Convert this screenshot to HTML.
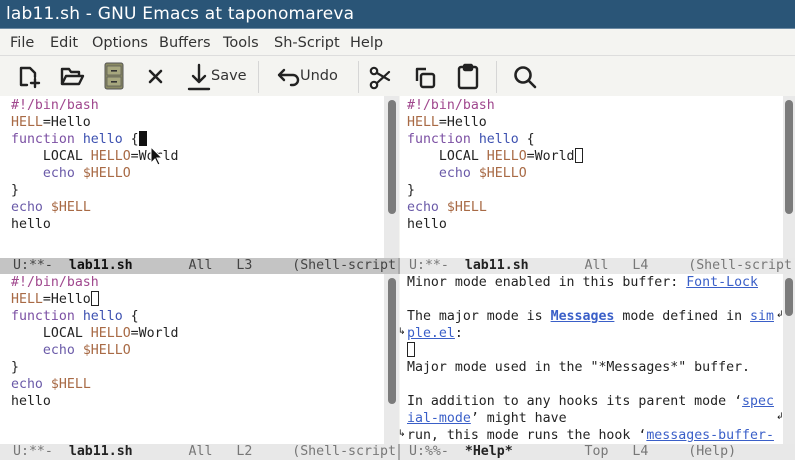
<!DOCTYPE html>
<html><head><meta charset="utf-8"><style>
*{margin:0;padding:0;box-sizing:border-box}
body{width:795px;height:460px;overflow:hidden;background:#f4f4f1;font-family:"DejaVu Sans","Liberation Sans",sans-serif;position:relative}
#title{position:absolute;left:0;top:0;width:795px;height:29px;background:#2a5577;color:#fff;font-size:17px;line-height:29px;padding-left:6px;letter-spacing:.2px;border-bottom:1px solid #6c8aa3}
#menu{position:absolute;top:30px;left:0;width:795px;height:26px;font-size:14.5px;color:#333;line-height:26px;border-bottom:1px solid #ddd}
#menu span{position:absolute}
#tb{position:absolute;top:57px;left:0;width:795px;height:39px}
#tb svg{position:absolute}
.sep{position:absolute;top:4px;width:1px;height:32px;background:#d6d6d6}
.pane{position:absolute;background:#fff;font-family:"DejaVu Sans Mono",monospace;font-size:13.25px;line-height:17px;color:#222;white-space:pre;overflow:hidden}
.ml{position:absolute;font-family:"DejaVu Sans Mono",monospace;font-size:13.25px;line-height:15px;height:15px;white-space:pre;color:#555;overflow:hidden}
.sb{position:absolute;width:15px;background:#e9e9e9}
.th{position:absolute;left:4px;width:8px;background:#7b7b7b;border-radius:4px}
.c{color:#a0488e}.v{color:#a86a45}.k{color:#7b4fa3}.f{color:#3c50b0}.b{color:#6a5aa8}
a{color:#3a5fc8;text-decoration:underline}
.cur{display:inline-block;width:8px;height:15px;border:1px solid #222;vertical-align:-3px}
.ar{position:absolute;font-size:9px;color:#111;font-family:"DejaVu Sans",sans-serif}
</style></head><body>
<div id="title">lab11.sh - GNU Emacs at taponomareva</div>
<div id="menu"><span style="left:10px">File</span><span style="left:50px">Edit</span><span style="left:92px">Options</span><span style="left:159px">Buffers</span><span style="left:223px">Tools</span><span style="left:274px">Sh-Script</span><span style="left:350px">Help</span></div>
<div id="tb">
<svg style="left:16px;top:7px" width="26" height="26" viewBox="0 0 26 26" fill="none" stroke="#222" stroke-width="2.4" stroke-linecap="round" stroke-linejoin="round"><path d="M11 21H5V4h9l5 5v4"/><path d="M19 15v8M15 19h8"/></svg>
<svg style="left:59px;top:8px" width="26" height="24" viewBox="0 0 26 24" fill="none" stroke="#222" stroke-width="2.4" stroke-linejoin="round"><path d="M3 19V4h7l2 3h8v4"/><path d="M3 19l4-8h17l-4 8z"/></svg>
<svg style="left:104px;top:5px" width="20" height="28" viewBox="0 0 20 28"><rect x="1" y="1" width="18" height="26" rx="2" fill="#8a8a63" stroke="#555"/><rect x="3" y="4" width="14" height="9" fill="#a7a77e" stroke="#555" stroke-width=".7"/><rect x="3" y="15" width="14" height="9" fill="#a7a77e" stroke="#555" stroke-width=".7"/><rect x="7" y="8" width="6" height="1.6" fill="#333"/><rect x="7" y="19" width="6" height="1.6" fill="#333"/></svg>
<svg style="left:148px;top:12px" width="15" height="15" viewBox="0 0 15 15" stroke="#222" stroke-width="2.6" stroke-linecap="round"><path d="M2 2l11 11M13 2L2 13"/></svg>
<svg style="left:187px;top:6px" width="24" height="28" viewBox="0 0 24 28" fill="none" stroke="#222" stroke-width="2.4" stroke-linecap="round" stroke-linejoin="round"><path d="M12 2v17M6 13l6 6 6-6M2 26h20"/></svg>
<span style="position:absolute;left:211px;top:11px;font-size:14.5px;color:#333">Save</span>
<div class="sep" style="left:258px"></div>
<svg style="left:276px;top:10px" width="26" height="20" viewBox="0 0 26 20" fill="none" stroke="#222" stroke-width="2.4" stroke-linecap="round" stroke-linejoin="round"><path d="M8 3L3 8l5 5M3 8h14a5 5 0 010 10h-2"/></svg>
<span style="position:absolute;left:300px;top:11px;font-size:14.5px;color:#333">Undo</span>
<div class="sep" style="left:358px"></div>
<svg style="left:367px;top:8px" width="26" height="26" viewBox="0 0 26 26" fill="none" stroke="#222" stroke-width="2.2" stroke-linecap="round"><circle cx="7" cy="6" r="3.2"/><circle cx="7" cy="20" r="3.2"/><path d="M10 8l12 7M10 18l12-11"/></svg>
<svg style="left:412px;top:7px" width="26" height="26" viewBox="0 0 26 26" fill="none" stroke="#222" stroke-width="2.4" stroke-linejoin="round"><path d="M14 5H5v12"/><rect x="9" y="10" width="13" height="13" rx="2"/></svg>
<svg style="left:456px;top:6px" width="24" height="28" viewBox="0 0 24 28" fill="none" stroke="#222" stroke-width="2.4" stroke-linejoin="round"><rect x="3" y="4" width="18" height="21" rx="2"/><rect x="8" y="2" width="8" height="5" rx="1" fill="#222"/></svg>
<div class="sep" style="left:496px"></div>
<svg style="left:512px;top:7px" width="26" height="26" viewBox="0 0 26 26" fill="none" stroke="#222" stroke-width="2.6" stroke-linecap="round"><circle cx="11" cy="11" r="7.5"/><path d="M17 17l6 6"/></svg>
</div>

<div class="pane" style="left:0;top:96px;width:384px;height:162px;padding:1px 0 0 11px"><span class="c">#!/bin/bash</span>
<span class="v">HELL</span>=Hello
<span class="k">function</span> <span class="f">hello</span> {<span style="display:inline-block;width:8px;height:15px;background:#111;vertical-align:-3px"></span>
    LOCAL <span class="v">HELLO</span>=World
    <span class="b">echo</span> <span class="v">$HELLO</span>
}
<span class="b">echo</span> <span class="v">$HELL</span>
hello</div>
<svg style="position:absolute;left:150px;top:146px" width="14" height="20" viewBox="0 0 14 20"><path d="M1 1v16l4-4 3 6 2-1-3-6h5z" fill="#111" stroke="#fff" stroke-width="1"/></svg>
<div class="sb" style="left:384px;top:96px;height:162px"><div class="th" style="top:4px;height:114px"></div></div>

<div class="pane" style="left:400px;top:96px;width:383px;height:162px;padding:1px 0 0 7px"><span class="c">#!/bin/bash</span>
<span class="v">HELL</span>=Hello
<span class="k">function</span> <span class="f">hello</span> {
    LOCAL <span class="v">HELLO</span>=World<span class="cur"></span>
    <span class="b">echo</span> <span class="v">$HELLO</span>
}
<span class="b">echo</span> <span class="v">$HELL</span>
hello</div>
<div class="sb" style="left:783px;top:96px;height:162px;width:12px"><div class="th" style="top:4px;height:114px;left:2px"></div></div>

<div class="ml" style="left:0;top:258px;width:398px;background:#c4c4c4;color:#444;padding-left:13px;height:16px;line-height:16px">U:**-  <b style="color:#111">lab11.sh</b>       All   L3     (Shell-script</div>
<div class="ml" style="left:398px;top:258px;width:397px;background:#e8e8e8;color:#777;padding-left:9px;height:16px;line-height:16px;border-left:2px solid #aaa">U:**-  <b style="color:#222">lab11.sh</b>       All   L4     (Shell-script</div>

<div class="pane" style="left:0;top:274px;width:384px;height:170px;padding:0 0 0 11px"><span class="c">#!/bin/bash</span>
<span class="v">HELL</span>=Hello<span class="cur"></span>
<span class="k">function</span> <span class="f">hello</span> {
    LOCAL <span class="v">HELLO</span>=World
    <span class="b">echo</span> <span class="v">$HELLO</span>
}
<span class="b">echo</span> <span class="v">$HELL</span>
hello</div>
<div class="sb" style="left:384px;top:274px;height:170px"><div class="th" style="top:4px;height:126px"></div></div>

<div class="pane" style="left:400px;top:274px;width:383px;height:170px;padding:0 0 0 7px">Minor mode enabled in this buffer: <a>Font-Lock</a>

The major mode is <a style="font-weight:bold">Messages</a> mode defined in <a>sim</a>
<a>ple.el</a>:
<span class="cur"></span>
Major mode used in the "*Messages*" buffer.

In addition to any hooks its parent mode ‘<a>spec</a>
<a>ial-mode</a>’ might have
run, this mode runs the hook ‘<a>messages-buffer-</a></div>
<span class="ar" style="left:776px;top:310px">&#x21b2;</span>
<span class="ar" style="left:398px;top:327px">&#x21b3;</span>
<span class="ar" style="left:776px;top:412px">&#x21b2;</span>
<span class="ar" style="left:398px;top:429px">&#x21b3;</span>
<div class="sb" style="left:783px;top:274px;height:170px;width:12px"><div class="th" style="top:4px;height:38px;left:2px"></div></div>

<div class="ml" style="left:0;top:444px;width:398px;background:#e8e8e8;color:#777;padding-left:13px;height:16px;line-height:16px">U:**-  <b style="color:#222">lab11.sh</b>       All   L2     (Shell-script</div>
<div class="ml" style="left:398px;top:444px;width:397px;background:#e8e8e8;color:#777;padding-left:9px;height:16px;line-height:16px;border-left:2px solid #aaa">U:%%-  <b style="color:#222">*Help*</b>         Top   L4     (Help)</div>
</body></html>
